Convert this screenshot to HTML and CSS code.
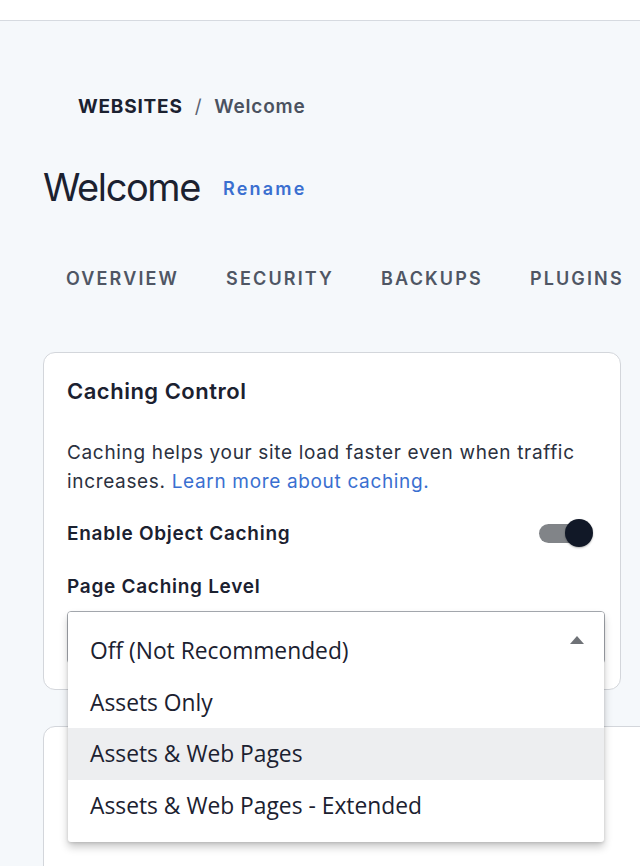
FILE: index.html
```html
<!DOCTYPE html>
<html lang="en">
<head>
<meta charset="utf-8">
<title>Welcome</title>
<link rel="stylesheet" href="styles.css">
</head>
<body>
<div class="topbar"></div>
<main class="page">
  <nav class="breadcrumb">
    <span class="crumb-root">WEBSITES</span>
    <span class="crumb-sep">/</span>
    <span class="crumb-current">Welcome</span>
  </nav>
  <div class="title-row">
    <h1 class="title">Welcome</h1>
    <a class="rename" href="#">Rename</a>
  </div>
  <div class="tabs">
    <span class="tab">OVERVIEW</span>
    <span class="tab">SECURITY</span>
    <span class="tab">BACKUPS</span>
    <span class="tab">PLUGINS</span>
  </div>
  <section class="card">
    <h2 class="card-title">Caching Control</h2>
    <p class="desc"><span class="desc-line">Caching helps your site load faster even when traffic</span><span class="desc-line"><span>increases.</span> <a class="link" href="#">Learn more about caching.</a></span></p>
    <div class="toggle-row">
      <span class="label">Enable Object Caching</span>
      <span class="switch"><span class="track"></span><span class="knob"></span></span>
    </div>
    <div class="label level-label">Page Caching Level</div>
    <div class="select">
      <div class="listbox">
        <div class="option">Off (Not Recommended)</div>
        <div class="option">Assets Only</div>
        <div class="option active">Assets &amp; Web Pages</div>
        <div class="option">Assets &amp; Web Pages - Extended</div>
        <span class="caret"></span>
      </div>
    </div>
  </section>
  <section class="card card2"></section>
</main>
</body>
</html>
```
FILE: styles.css
```css
html, body {
  margin: 0;
  padding: 0;
  overflow: hidden;
  height: 866px;
}
body {
  background: #f5f8fb;
  font-family: Inter, "Noto Sans", sans-serif;
  color: #1f2533;
}
.topbar {
  height: 20px;
  background: #ffffff;
  border-bottom: 1px solid #d6dae0;
}
.page {
  padding: 0 0 0 43px;
  width: 700px;
}
.breadcrumb {
  padding: 74px 0 0 35px;
  display: flex;
  align-items: center;
  gap: 12px;
  font-size: 19px;
  line-height: 24px;
  font-weight: 700;
  letter-spacing: 0.8px;
}
.crumb-root { color: #1b2130; }
.crumb-sep { color: #5b6270; font-weight: 400; }
.crumb-current { color: #4b5260; font-weight: 600; }
.title-row {
  display: flex;
  align-items: center;
  gap: 23px;
  margin-top: 44px;
  height: 48px;
}
.title {
  margin: 0;
  font-size: 38px;
  font-weight: 400;
  letter-spacing: -1.4px;
  color: #1b2130;
  line-height: 48px;
}
.rename {
  color: #3a6fd0;
  font-size: 18px;
  font-weight: 600;
  letter-spacing: 2.2px;
  text-decoration: none;
  margin-top: 2px;
}
.tabs {
  display: flex;
  gap: 47px;
  padding-left: 23px;
  margin-top: 50px;
  height: 34px;
  align-items: center;
}
.tab {
  font-size: 18px;
  font-weight: 600;
  letter-spacing: 2.15px;
  color: #4f5664;
}
.card {
  margin-top: 57px;
  width: 578px;
  box-sizing: border-box;
  background: #fff;
  border: 1px solid #d3d6db;
  border-radius: 12px;
  padding: 24px 16px 25px 23px;
}
.card-title {
  margin: 0;
  font-size: 22px;
  font-weight: 600;
  line-height: 28px;
  letter-spacing: 0.5px;
  color: #1b2130;
}
.desc {
  margin: 33px 0 0;
  font-size: 19px;
  line-height: 29px;
  letter-spacing: 0.66px;
  color: #2b3140;
}
.desc-line { display: block; }
.link { color: #3a6fd0; text-decoration: none; }
.toggle-row {
  display: flex;
  justify-content: space-between;
  align-items: center;
  margin-top: 22px;
  height: 30px;
}
.label {
  font-size: 19px;
  font-weight: 600;
  letter-spacing: 0.72px;
  color: #1b2130;
}
.switch {
  position: relative;
  width: 54px;
  height: 30px;
  margin-right: 11px;
}
.track {
  position: absolute;
  left: 0;
  top: 6px;
  width: 46px;
  height: 19px;
  border-radius: 10px;
  background: #818488;
}
.knob {
  position: absolute;
  right: 0;
  top: 1px;
  width: 28px;
  height: 28px;
  border-radius: 50%;
  background: #111827;
  box-shadow: 0 1px 2px rgba(0,0,0,.3);
}
.level-label {
  margin-top: 27px;
  line-height: 24px;
}
.select {
  position: relative;
  margin-top: 12px;
  width: 538px;
  height: 53px;
  box-sizing: border-box;
  border: 1px solid #a9adb3;
  border-radius: 4px;
}
.listbox {
  position: absolute;
  z-index: 5;
  top: 0;
  left: 0;
  right: 0;
  background: #fff;
  border-radius: 3px;
  box-shadow: 0 5px 8px rgba(0,0,0,.22), 0 1px 3px rgba(0,0,0,.12);
  padding: 13px 0 11px;
  font-family: "Open Sans", "Noto Sans", sans-serif;
  font-size: 22.8px;
  color: #1b2130;
}
.option {
  height: 51.5px;
  line-height: 51.5px;
  padding-left: 22px;
}
.option.active { background: #edeef0; }
.caret {
  position: absolute;
  top: 24px;
  right: 20px;
  width: 0;
  height: 0;
  border-left: 7px solid transparent;
  border-right: 7px solid transparent;
  border-bottom: 8px solid #6f7277;
}
.card2 {
  margin-top: 36px;
  width: 640px;
  height: 200px;
  padding: 0;
}
```
